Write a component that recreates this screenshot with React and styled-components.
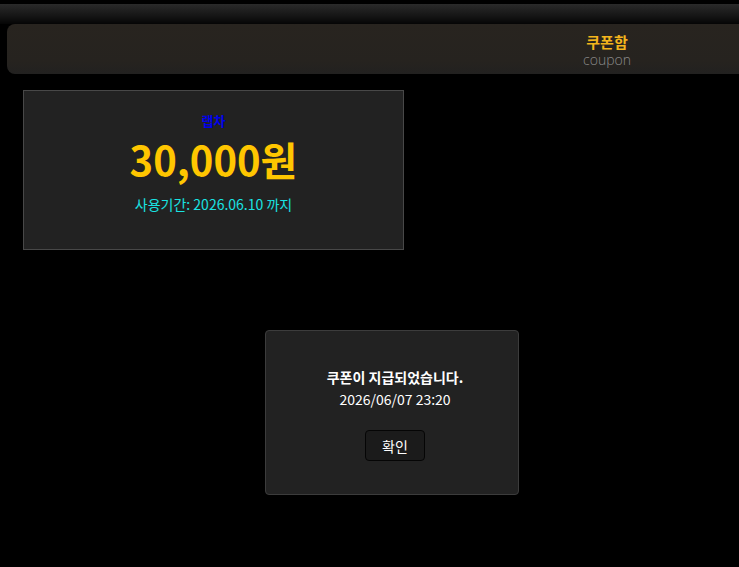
import React from 'react';
import styled, { createGlobalStyle } from 'styled-components';

const GlobalStyle = createGlobalStyle`
  html, body {
    margin: 0;
    padding: 0;
    background: #000;
  }
  body {
    font-family: "Noto Sans CJK KR", "Noto Sans", sans-serif;
    overflow: hidden;
  }
`;

// Styled Components -->

const Page = styled.div`
  position: relative;
  width: 739px;
  height: 567px;
  background: #000;
  overflow: hidden;
`;

const TopStrip = styled.div`
  height: 20px;
  margin-top: 4px;
  background: linear-gradient(to bottom, #2a2a2a 0%, #151515 60%, #050505 100%);
`;

const Header = styled.header`
  display: flex;
  align-items: center;
  height: 50px;
  margin-left: 7px;
  width: 760px;
  padding: 4px 0 0 568px;
  box-sizing: border-box;
  border-radius: 8px;
  background: linear-gradient(to bottom, #28241f 0%, #26231f 75%, #222120 100%);
`;

const HeaderTitle = styled.div`
  display: flex;
  flex-direction: column;
  align-items: center;
  width: 64px;
  line-height: 18px;
`;

const TitleKo = styled.span`
  color: #f4b51c;
  font-size: 15px;
  font-weight: bold;
`;

const TitleEn = styled.span`
  color: #8a8a8a;
  font-size: 14px;
  font-weight: 300;
  font-family: "Open Sans", sans-serif;
`;

const CouponCard = styled.section`
  display: flex;
  flex-direction: column;
  align-items: center;
  box-sizing: border-box;
  width: 381px;
  height: 160px;
  margin: 16px 0 0 23px;
  padding-top: 21px;
  background: #222;
  border: 1px solid #484848;
`;

const CouponName = styled.div`
  color: #0000ee;
  font-size: 13px;
  font-weight: bold;
  line-height: 18px;
`;

const Amount = styled.div`
  color: #ffc600;
  font-size: 40px;
  font-weight: bold;
  line-height: 48px;
  margin-top: 5px;
`;

const Expiry = styled.div`
  color: #19e3e3;
  font-size: 14px;
  line-height: 20px;
  margin-top: 11px;
`;

const Dialog = styled.div`
  position: absolute;
  left: 265px;
  top: 330px;
  width: 254px;
  height: 165px;
  box-sizing: border-box;
  padding: 35px 0 0 6px;
  display: flex;
  flex-direction: column;
  align-items: center;
  background: #222;
  border: 1px solid #3c3c3c;
  border-radius: 4px;
`;

const Message = styled.div`
  color: #fff;
  font-size: 14px;
  line-height: 22px;
  font-weight: ${props => (props.bold ? 'bold' : 'normal')};
`;

const ConfirmButton = styled.button`
  margin-top: 20px;
  width: 60px;
  height: 31px;
  background: #1b1b1b;
  border: 1px solid #050505;
  border-radius: 4px;
  color: #fff;
  font-family: inherit;
  font-size: 14px;
  cursor: pointer;
`;

// App Component -->

const App = () => {
  return (
    <Page>
      <GlobalStyle />
      <TopStrip />
      <Header>
        <HeaderTitle>
          <TitleKo>쿠폰함</TitleKo>
          <TitleEn>coupon</TitleEn>
        </HeaderTitle>
      </Header>
      <CouponCard>
        <CouponName>랩차</CouponName>
        <Amount>30,000원</Amount>
        <Expiry>사용기간: 2026.06.10 까지</Expiry>
      </CouponCard>
      <Dialog>
        <Message bold>쿠폰이 지급되었습니다.</Message>
        <Message>2026/06/07 23:20</Message>
        <ConfirmButton type="button">확인</ConfirmButton>
      </Dialog>
    </Page>
  );
};

export default App;
